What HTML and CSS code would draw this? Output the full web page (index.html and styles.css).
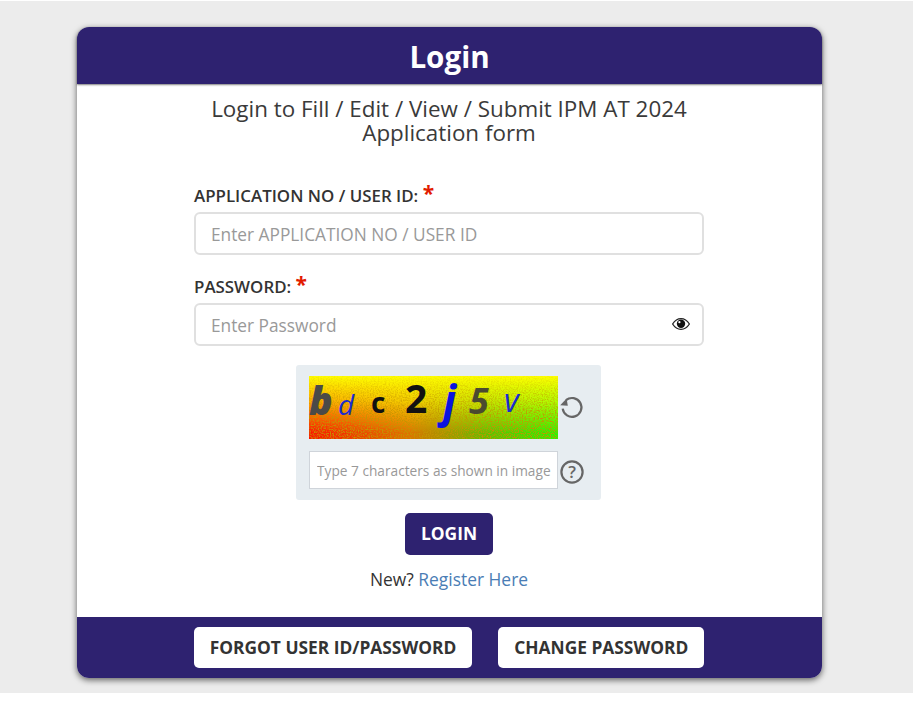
FILE: index.html
```html
<!DOCTYPE html>
<html>
<head>
    <title>Login</title>
    <link rel="stylesheet" href="styles.css">
</head>
<body>
    <div class="page">
        <div class="login-card">
            <div class="card-header">Login</div>
            <div class="card-body">
                <p class="intro">Login to Fill / Edit / View / Submit IPM AT 2024<br>Application form</p>
                <div class="field">
                    <label class="field-label">APPLICATION NO / USER ID: <span class="required">*</span></label>
                    <input class="text-input" type="text" placeholder="Enter APPLICATION NO / USER ID">
                </div>
                <div class="field">
                    <label class="field-label">PASSWORD: <span class="required">*</span></label>
                    <div class="password-wrap">
                        <input class="text-input" type="password" placeholder="Enter Password">
                        <!-- eye toggle -->
                        <svg class="eye-icon" width="18" height="14" viewBox="0 0 18 14">
                            <path d="M0.6 7C3 3.2 5.8 1.6 9 1.6S15 3.2 17.4 7C15 10.8 12.2 12.4 9 12.4S3 10.8 0.6 7Z" fill="#fff" stroke="#222" stroke-width="1.3"/>
                            <circle cx="9" cy="6.8" r="4.2" fill="#111"/>
                            <circle cx="7.4" cy="5.2" r="1.1" fill="#fff"/>
                        </svg>
                    </div>
                </div>
                <div class="captcha-box">
                    <div class="captcha-row">
                        <div class="captcha-image">
                            <svg class="captcha-noise" width="249" height="63">
                                <filter id="grain">
                                    <feTurbulence type="fractalNoise" baseFrequency="0.75" numOctaves="2" seed="4"/>
                                    <feColorMatrix values="0 0 0 0 0.55  0 0 0 0 0.3  0 0 0 0 0  0 0 0 3 -1.2"/>
                                </filter>
                                <linearGradient id="fade" x1="0" y1="0" x2="0" y2="1">
                                    <stop offset="0" stop-color="#fff" stop-opacity="0.1"/>
                                    <stop offset="0.7" stop-color="#fff" stop-opacity="1"/>
                                </linearGradient>
                                <mask id="grain-mask">
                                    <rect width="249" height="63" fill="url(#fade)"/>
                                </mask>
                                <g mask="url(#grain-mask)">
                                    <rect width="249" height="63" filter="url(#grain)"/>
                                </g>
                            </svg>
                            <span class="ch ch-b">b</span>
                            <span class="ch ch-d">d</span>
                            <span class="ch ch-c">c</span>
                            <span class="ch ch-2">2</span>
                            <span class="ch ch-j">j</span>
                            <span class="ch ch-5">5</span>
                            <span class="ch ch-v">v</span>
                        </div>
                        <svg class="captcha-icon refresh-icon" width="26" height="26" viewBox="0 0 26 26">
                            <path d="M7 6.2A9.4 9.4 0 1 1 3.7 14.6" fill="none" stroke="#666" stroke-width="2.2"/>
                            <path d="M1.2 11.2L8.8 11.8L7.6 4.4Z" fill="#666"/>
                        </svg>
                    </div>
                    <div class="captcha-row">
                        <input class="captcha-input" type="text" placeholder="Type 7 characters as shown in image">
                        <svg class="captcha-icon help-icon" width="26" height="26" viewBox="0 0 26 26">
                            <circle cx="13" cy="13" r="10.6" fill="none" stroke="#666" stroke-width="2.2"/>
                            <text x="13" y="19" text-anchor="middle" class="help-mark">?</text>
                        </svg>
                    </div>
                </div>
                <div class="login-row"><button class="login-btn">LOGIN</button></div>
                <p class="register">New? <a href="#">Register Here</a></p>
            </div>
            <div class="card-footer">
                <button class="footer-btn">FORGOT USER ID/PASSWORD</button>
                <button class="footer-btn">CHANGE PASSWORD</button>
            </div>
        </div>
    </div>
</body>
</html>
```

FILE: styles.css
```css
html, body {
    margin: 0;
    padding: 0;
    background-color: #fff;
}
body {
    font-family: "Open Sans", sans-serif;
    color: #333;
    height: 713px;
    overflow: hidden;
}
.page {
    margin-top: 1px;
    height: 692px;
    box-sizing: border-box;
    padding: 26px 91px 0 77px;
    background-color: #ececec;
}
.login-card {
    height: 651px;
    display: flex;
    flex-direction: column;
    background-color: #fff;
    border-radius: 12px;
    box-shadow: 0 2px 6px rgba(0, 0, 0, 0.6);
}
.card-header {
    height: 57px;
    line-height: 59px;
    flex-shrink: 0;
    text-align: center;
    font-size: 29.6px;
    font-weight: 700;
    color: #fff;
    background-color: #2e2270;
    border-radius: 12px 12px 0 0;
    box-shadow: 0 1px 2px rgba(0, 0, 0, 0.5);
}
.card-body {
    flex-grow: 1;
    padding: 0 118px 0 117px;
}
.intro {
    margin: 13px 0 36px;
    text-align: center;
    font-size: 22.4px;
    line-height: 24px;
    color: #3a3a3a;
}
.field {
    margin-bottom: 17px;
}
.field-label {
    display: block;
    height: 31px;
    line-height: 29px;
    font-size: 16.9px;
    font-weight: 600;
}
.required {
    color: #e21b00;
    font-size: 21px;
    line-height: 20px;
    font-weight: 700;
    vertical-align: 1px;
}
.text-input {
    display: block;
    width: 100%;
    height: 43px;
    box-sizing: border-box;
    padding: 2px 15px 0;
    font-family: "Open Sans", sans-serif;
    font-size: 17.3px;
    color: #333;
    background-color: #fff;
    border: 2px solid #e0e0e0;
    border-radius: 6px;
}
.text-input::placeholder {
    color: #999;
}
.password-wrap {
    position: relative;
}
.eye-icon {
    position: absolute;
    top: 14px;
    right: 14px;
}
.captcha-box {
    width: 305px;
    height: 135px;
    box-sizing: border-box;
    margin: 19px 0 13px 102px;
    padding: 11px 13px 0;
    background-color: #e7edf1;
    border-radius: 3px;
}
.captcha-row {
    display: flex;
    align-items: center;
    gap: 1px;
    margin-bottom: 12px;
}
.refresh-icon {
    margin-bottom: 2px;
}
.help-icon {
    margin-top: 4px;
}
.captcha-image {
    position: relative;
    width: 249px;
    height: 63px;
    background:
        linear-gradient(to bottom, #ffff00 0%, rgba(255, 255, 0, 0.65) 40%, rgba(255, 255, 0, 0) 90%),
        linear-gradient(to right, #ff1000 0%, #e07000 40%, #60c000 70%, #22ff00 100%);
}
.captcha-noise {
    position: absolute;
    top: 0;
    left: 0;
}
.ch {
    position: absolute;
    font-family: "Open Sans", sans-serif;
    line-height: 1;
}
.ch-b { left: 0; top: 4px; font-size: 39px; font-weight: 800; font-style: italic; color: #4a4a48; }
.ch-d { left: 29px; top: 14px; font-size: 28px; font-style: italic; color: #1a2ccf; }
.ch-c { left: 62px; top: 12px; font-size: 28px; font-weight: 700; color: #111; }
.ch-2 { left: 96px; top: 2px; font-size: 39px; font-weight: 700; color: #111; }
.ch-j { left: 134px; top: 2px; font-size: 44px; font-weight: 700; font-style: italic; color: #0a14e0; }
.ch-5 { left: 160px; top: 7px; font-size: 36px; font-weight: 700; font-style: italic; color: #4a4a30; }
.ch-v { left: 195px; top: 8px; font-size: 32px; font-style: italic; color: #1a2ccf; }
.captcha-input {
    width: 249px;
    height: 38px;
    box-sizing: border-box;
    padding: 0 3px 0 7px;
    font-family: "Open Sans", sans-serif;
    font-size: 13.7px;
    background-color: #fff;
    border: 1px solid #cfd4da;
}
.captcha-input::placeholder {
    color: #999;
}
.help-mark {
    font-family: "Open Sans", sans-serif;
    font-size: 17px;
    font-weight: 600;
    fill: #666;
}
.login-row {
    text-align: center;
}
.login-btn {
    width: 88px;
    height: 42px;
    padding: 0 0 2px;
    font-family: "Open Sans", sans-serif;
    font-size: 17.4px;
    font-weight: 700;
    color: #fff;
    background-color: #2e2270;
    border: none;
    border-radius: 5px;
}
.register {
    margin: 12px 0 0;
    text-align: center;
    font-size: 17.4px;
    line-height: 24px;
}
.register a {
    color: #4a7db5;
    text-decoration: none;
}
.card-footer {
    height: 61px;
    flex-shrink: 0;
    box-sizing: border-box;
    display: flex;
    justify-content: center;
    gap: 26px;
    padding: 10px 1px 0 0;
    background-color: #2e2270;
    border-radius: 0 0 12px 12px;
}
.footer-btn {
    height: 41px;
    padding: 0 16px 2px;
    font-family: "Open Sans", sans-serif;
    font-size: 17.35px;
    font-weight: 700;
    color: #333;
    background-color: #fff;
    border: none;
    border-radius: 5px;
}
```
